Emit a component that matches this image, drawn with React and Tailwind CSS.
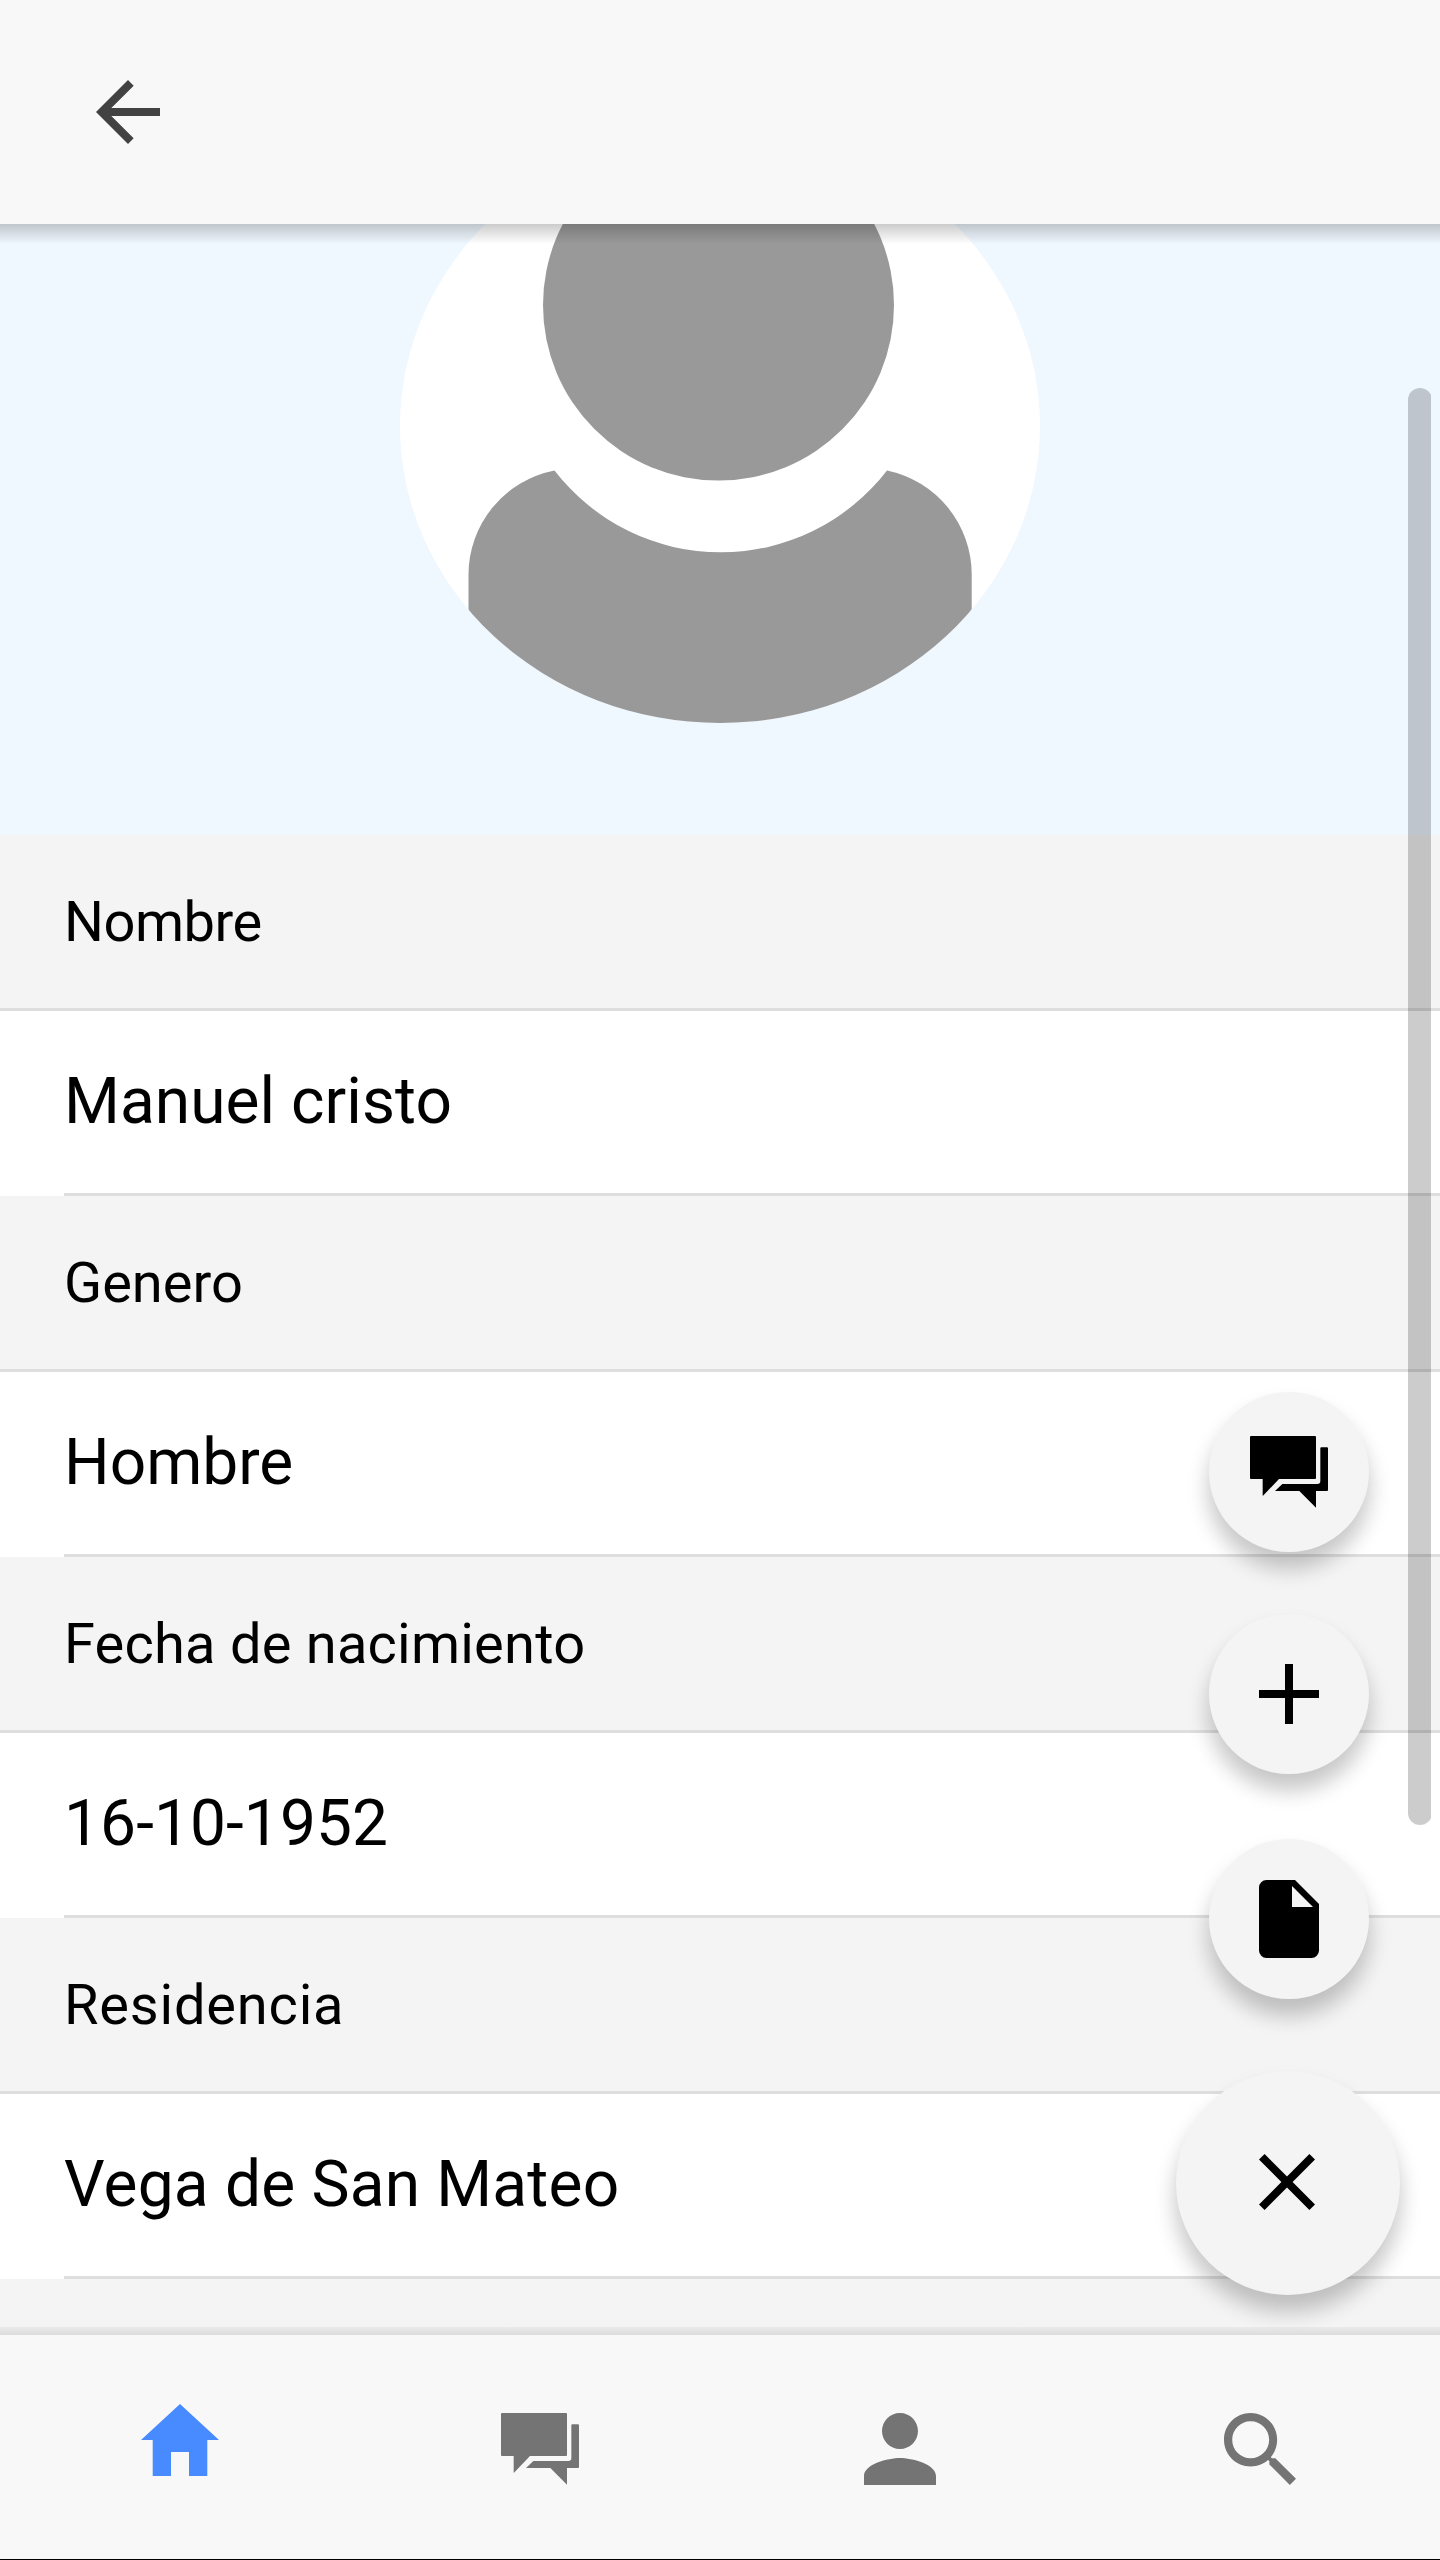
const FIELDS = [
  { label: 'Nombre', value: 'Manuel cristo', labelTracking: 'tracking-[-0.5px]', valueTracking: 'tracking-[0.05px]' },
  { label: 'Genero', value: 'Hombre', labelTracking: 'tracking-normal', valueTracking: 'tracking-normal' },
  { label: 'Fecha de nacimiento', value: '16-10-1952', labelTracking: 'tracking-[0.22px]', valueTracking: 'tracking-[0.1px]' },
  { label: 'Residencia', value: 'Vega de San Mateo', labelTracking: 'tracking-[0.8px]', valueTracking: 'tracking-[0.2px]' },
];

function ArrowBackIcon() {
  return (
    <svg className="h-16 w-16" viewBox="4 4 16 16" fill="currentColor">
      <path d="M20 11H7.83l5.59-5.59L12 4l-8 8 8 8 1.41-1.41L7.83 13H20v-2z" />
    </svg>
  );
}

function ChatIcon() {
  return (
    <svg className="h-[72px] w-[78px]" viewBox="330 228 234 216" fill="currentColor">
      <path d="M333 228H525q3 0 3 3V354q0 3-3 3H417L369 407q-1 1-1-1V357H333q-3 0-3-3V231q0-3 3-3z" />
      <path d="M544 262H561q3 0 3 3V390q0 3-3 3H528V443L478 393H405L427 372H532q9 0 9-9V265q0-3 3-3z" />
    </svg>
  );
}

function PlusIcon() {
  return (
    <svg className="h-[60px] w-[60px]" viewBox="0 0 60 60" fill="currentColor">
      <path d="M26 0h8v26h26v8H34v26h-8V34H0v-8h26z" />
    </svg>
  );
}

function DocumentIcon() {
  return (
    <svg className="h-[78px] w-[60px]" viewBox="0 0 60 78" fill="currentColor">
      <path
        fillRule="evenodd"
        d="M7.5 0H36L60 24V70.5a7.5 7.5 0 0 1-7.5 7.5h-45A7.5 7.5 0 0 1 0 70.5v-63A7.5 7.5 0 0 1 7.500 0zM33 6v21h21z"
      />
    </svg>
  );
}

function CloseIcon() {
  return (
    <svg className="mr-0.5 mb-0.5 h-14 w-14" viewBox="0 0 56 56" fill="currentColor">
      <path d="M56 5.600 50.400 0 28 22.400 5.600 0 0 5.600 22.400 28 0 50.400 5.600 56 28 33.600 50.400 56 56 50.400 33.600 28z" />
    </svg>
  );
}

function HomeIcon() {
  return (
    <svg className="h-[72px] w-[78px]" viewBox="48 64 416 384" fill="currentColor">
      <path d="M208 448V320h96v128h97.6V256H464L256 64 48 256h62.4v192z" />
    </svg>
  );
}

function PersonIcon() {
  return (
    <svg className="h-[72px] w-[72px]" viewBox="64 64 384 384" fill="currentColor">
      <path d="M256 256c52.8 0 96-43.2 96-96s-43.2-96-96-96-96 43.2-96 96 43.2 96 96 96zm0 48c-63.6 0-192 32.4-192 96v48h384v-48c0-63.6-128.4-96-192-96z" />
    </svg>
  );
}

function SearchIcon() {
  return (
    <svg className="h-[72px] w-[72px]" viewBox="64 64 384 384" fill="currentColor">
      <path d="M337.509 305.372h-17.501l-6.571-5.486c20.791-25.181 33.922-57.054 33.922-93.257C347.358 127.632 283.896 64 205.135 64 127.452 64 64 127.632 64 206.629s63.452 142.628 142.225 142.628c35.011 0 67.831-13.167 92.991-34.008l6.561 5.487v17.551L415.18 448 448 415.086 337.509 305.372zm-131.284 0c-54.702 0-98.463-43.887-98.463-98.743 0-54.858 43.761-98.742 98.463-98.742 54.7 0 98.462 43.884 98.462 98.742 0 54.856-43.762 98.743-98.462 98.743z" />
    </svg>
  );
}

function Avatar() {
  return (
    <svg className="h-[594px] w-[640px] shrink-0" viewBox="400 129 640 594">
      <defs>
        <clipPath id="avatar-clip">
          <ellipse cx="720" cy="426" rx="320" ry="297" />
        </clipPath>
      </defs>
      <g clipPath="url(#avatar-clip)">
        <rect x="400" y="129" width="640" height="594" fill="#fff" />
        <circle cx="718.5" cy="305" r="175.500" fill="#999" />
        <path
          d="M468.500 730V575A106.500 106.500 0 0 1 554.500 470.400A209.600 209.600 0 0 0 887 470.400A106.500 106.500 0 0 1 971.700 575V730z"
          fill="#999"
        />
      </g>
    </svg>
  );
}

function Field({ label, value, labelTracking, valueTracking }) {
  return (
    <>
      <dt className={`flex h-44 items-center border-b-[3px] border-[#dedede] bg-[#f4f4f4] pl-16 text-[56px] ${labelTracking}`}>
        {label}
      </dt>
      <dd className="h-[185px] bg-white pl-16">
        <div className={`flex h-full items-center border-b-[3px] border-[#dedede] text-[64px] ${valueTracking}`}>{value}</div>
      </dd>
    </>
  );
}

function MiniFab({ label, children }) {
  return (
    <button
      aria-label={label}
      className="flex h-40 w-40 items-center justify-center rounded-full bg-[#f4f4f4] shadow-[0_16px_24px_rgba(0,0,0,0.14),0_16px_20px_rgba(0,0,0,0.1)]"
    >
      {children}
    </button>
  );
}

function FabMenu() {
  return (
    <div className="absolute top-[1392px] right-10 flex w-56 flex-col items-center text-black">
      <div className="flex flex-col pl-0.5">
        <MiniFab label="Chat">
          <ChatIcon />
        </MiniFab>
        <div className="pt-[62px] pb-[65px]">
          <MiniFab label="Agregar">
            <PlusIcon />
          </MiniFab>
        </div>
        <MiniFab label="Documento">
          <DocumentIcon />
        </MiniFab>
      </div>
      <button
        aria-label="Cerrar"
        className="mt-[72px] flex h-56 w-56 items-center justify-center rounded-full bg-[#f4f4f4] shadow-[0_16px_24px_rgba(0,0,0,0.14),0_16px_20px_rgba(0,0,0,0.1)]"
      >
        <CloseIcon />
      </button>
    </div>
  );
}

function Tab({ label, children }) {
  return (
    <button aria-label={label} className="flex flex-1 items-center justify-center pt-1">
      {children}
    </button>
  );
}

export default function App() {
  return (
    <div className="relative flex h-[2560px] w-[1440px] flex-col overflow-hidden bg-white font-['Roboto','Noto_Sans',sans-serif] leading-none text-black">
      <header className="relative z-10 flex h-56 shrink-0 items-center bg-[#f8f8f8] pl-24 text-[#424242]">
        <ArrowBackIcon />
        <div className="absolute top-full left-0 h-5 w-full bg-linear-to-b from-black/20 to-transparent" />
      </header>

      <main className="h-[2111px] shrink-0 overflow-hidden">
        <section className="flex h-[611px] items-end justify-center overflow-hidden bg-[#eff7ff] pb-28">
          <Avatar />
        </section>
        <dl>
          {FIELDS.map((field) => (
            <Field key={field.label} {...field} />
          ))}
        </dl>
        <div className="h-44 bg-[#f4f4f4]" />
      </main>

      <FabMenu />

      <div className="absolute top-[388px] right-[9px] h-[1437px] w-[23px] overflow-hidden">
        <div className="h-full w-6 rounded-full bg-black/20" />
      </div>

      <nav className="relative flex h-56 shrink-0 bg-[#f8f8f8] text-[#747474]">
        <div className="absolute bottom-full left-0 h-2 w-full bg-linear-to-b from-black/4 to-black/10" />
        <Tab label="Inicio">
          <span className="mb-[18px] text-[#488aff]">
            <HomeIcon />
          </span>
        </Tab>
        <Tab label="Mensajes">
          <ChatIcon />
        </Tab>
        <Tab label="Perfil">
          <PersonIcon />
        </Tab>
        <Tab label="Buscar">
          <SearchIcon />
        </Tab>
      </nav>
      <div className="h-px shrink-0 bg-black" />
    </div>
  );
}
